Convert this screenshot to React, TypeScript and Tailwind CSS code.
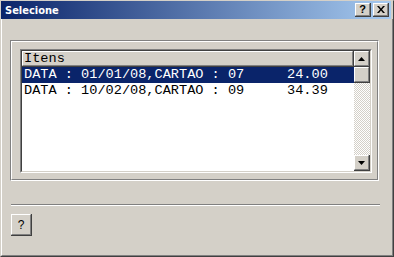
import React from 'react';

const rows = [
    { label: 'DATA : 01/01/08,CARTAO : 07', value: '24.00', selected: true },
    { label: 'DATA : 10/02/08,CARTAO : 09', value: '34.39', selected: false },
];

// raised win9x style button edges
const Raised: React.FC<{ className?: string; children?: React.ReactNode }> = ({ className = '', children }) => (
    <div className={`border-r border-b border-[#404040] bg-[#d4d0c8] ${className}`}>
        <div className="w-full h-full border-l border-t border-l-white border-t-white border-r border-b border-r-[#808080] border-b-[#808080] flex items-center justify-center">
            {children}
        </div>
    </div>
);

const Arrow: React.FC<{ down?: boolean }> = ({ down }) => (
    <svg width="7" height="4" viewBox="0 0 7 4">
        <path d={down ? 'M0 0h7L3.5 4z' : 'M3.5 0L7 4H0z'} fill="#000" />
    </svg>
);

export default function App() {
    return (
        <div className="w-[394px] h-[257px] bg-[#d4d0c8] border border-l-[#d4d0c8] border-t-[#d4d0c8] border-r-[#404040] border-b-[#404040] flex flex-col overflow-hidden">

            {/* Title bar */}
            <div className="h-[18px] mr-[2px] flex items-center justify-between pl-[4px] pr-[2px] bg-[linear-gradient(to_right,#0a246a,#a6caf0)]">
                <span className="text-white font-bold text-[11px] leading-none" style={{ fontFamily: '"DejaVu Sans Condensed", "DejaVu Sans", sans-serif' }}>
                    Selecione
                </span>
                <div className="flex gap-[2px]">
                    <Raised className="w-[16px] h-[14px]">
                        <span className="text-black font-bold text-[11px] leading-none" style={{ fontFamily: '"Liberation Sans", Arial, sans-serif' }}>?</span>
                    </Raised>
                    <Raised className="w-[16px] h-[14px]">
                        <svg width="8" height="7" viewBox="0 0 8 7">
                            <path d="M0 0h2l2 2.5L6 0h2L5 3.5 8 7H6L4 4.5 2 7H0l3-3.5z" fill="#000" />
                        </svg>
                    </Raised>
                </div>
            </div>

            {/* Body */}
            <div className="flex-1 border-l border-l-white border-r border-r-[#808080] border-b border-b-[#808080] pl-[8px] pt-[21px]">

                {/* Group box (etched) */}
                <div className="w-[369px] h-[141px] border border-l-[#808080] border-t-[#808080] border-r-white border-b-white">
                    <div className="w-full h-full border border-l-white border-t-white border-r-[#808080] border-b-[#808080] pl-[8px] pt-[7px]">

                        {/* List view, sunken */}
                        <div className="w-[352px] h-[124px] border border-l-[#808080] border-t-[#808080] border-r-white border-b-white">
                            <div className="w-full h-full border border-l-[#404040] border-t-[#404040] border-r-[#d4d0c8] border-b-[#d4d0c8] bg-white flex">
                                <div className="flex-1 flex flex-col" style={{ fontFamily: '"Liberation Mono", "Courier New", monospace' }}>
                                    <div className="h-[16px] border-r border-b border-[#404040] bg-[#d4d0c8]">
                                        <div className="h-full border-l border-t border-white border-r border-b border-r-[#808080] border-b-[#808080] pl-[1px] flex items-center text-[13.6px] leading-none text-black">
                                            Itens
                                        </div>
                                    </div>
                                    {rows.map((r) => (
                                        <div
                                            key={r.label}
                                            className={`h-[16px] flex items-center pl-[2px] text-[13.6px] leading-none whitespace-pre ${r.selected ? 'bg-[#0a246a] text-white' : 'bg-white text-black'}`}
                                        >
                                            <span className="w-[263px]">{r.label}</span>
                                            <span>{r.value}</span>
                                        </div>
                                    ))}
                                </div>

                                {/* Scrollbar */}
                                <div className="w-[16px] flex flex-col bg-[repeating-conic-gradient(#d4d0c8_0_25%,#ffffff_0_50%)] bg-[length:2px_2px]">
                                    <Raised className="w-[16px] h-[16px]"><Arrow /></Raised>
                                    <Raised className="w-[16px] h-[16px]" />
                                    <div className="flex-1" />
                                    <Raised className="w-[16px] h-[16px]"><Arrow down /></Raised>
                                </div>
                            </div>
                        </div>
                    </div>
                </div>

                {/* Separator */}
                <div className="ml-[1px] mt-[23px] w-[369px] h-[2px] border-t border-t-[#808080] border-b border-b-white" />

                {/* Help button */}
                <Raised className="ml-[1px] mt-[8px] w-[21px] h-[22px]">
                    <span className="text-black text-[12px] leading-none" style={{ fontFamily: '"Liberation Sans", Arial, sans-serif' }}>?</span>
                </Raised>
            </div>
        </div>
    );
}
